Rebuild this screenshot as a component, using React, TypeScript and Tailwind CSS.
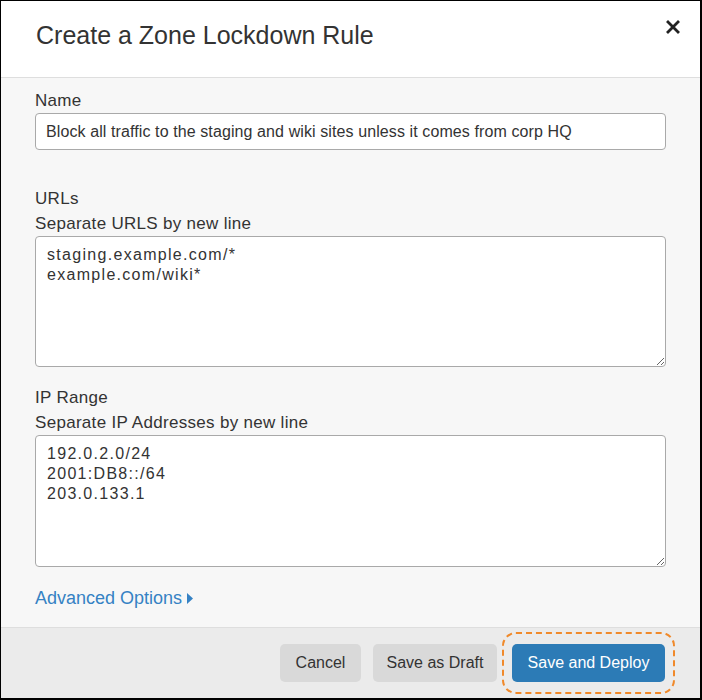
import React from "react";

const font = { fontFamily: '"Liberation Sans", Arial, sans-serif' };

function Field({ label, hint, children }: { label: string; hint?: string; children: React.ReactNode }) {
  return (
    <div className="flex flex-col">
      <div className="text-[17px] leading-[25px] tracking-[0.3px] text-[#333]">{label}</div>
      {hint && <div className="text-[17px] leading-[25px] tracking-[0.3px] text-[#333]">{hint}</div>}
      {children}
    </div>
  );
}

const areaCls =
  "w-full block bg-white border border-[#a9a9a9] rounded-[4px] px-[11px] pt-[8px] text-[16px] leading-[20px] tracking-[1.3px] text-[#333] outline-none";

export default function App() {
  return (
    <div
      className="w-[702px] h-[700px] border border-black border-r-2 border-b-2 flex flex-col bg-white text-[#333]"
      style={font}
    >
      <header className="h-[77px] shrink-0 bg-white border-b border-[#dedede] flex items-center justify-between pl-[35px] pr-[20px]">
        <h1 className="text-[25px] text-[#333] -mt-[7px]">Create a Zone Lockdown Rule</h1>
        <button aria-label="Close" className="-mt-[24px] text-[#222]">
          <svg width="14" height="14" viewBox="0 0 14 14">
            <path d="M2 2 L12 12 M12 2 L2 12" stroke="currentColor" strokeWidth="2.8" strokeLinecap="square" />
          </svg>
        </button>
      </header>

      <main className="flex-1 bg-[#f7f7f7] px-[34px] pt-[10px] flex flex-col">
        <Field label="Name">
          <input
            readOnly
            defaultValue="Block all traffic to the staging and wiki sites unless it comes from corp HQ"
            className="w-full h-[37px] bg-white border border-[#a9a9a9] rounded-[4px] px-[10px] text-[16px] tracking-[0.1px] text-[#333] outline-none"
            style={font}
          />
        </Field>

        <div className="mt-[36px]">
          <Field label="URLs" hint="Separate URLS by new line">
            <textarea
              readOnly
              defaultValue={"staging.example.com/*\nexample.com/wiki*"}
              className={`${areaCls} h-[131px]`}
              style={font}
            />
          </Field>
        </div>

        <div className="mt-[18px]">
          <Field label="IP Range" hint="Separate IP Addresses by new line">
            <textarea
              readOnly
              defaultValue={"192.0.2.0/24\n2001:DB8::/64\n203.0.133.1"}
              className={`${areaCls} h-[132px]`}
              style={font}
            />
          </Field>
        </div>

        <a href="#" className="mt-[20px] flex items-center gap-[5px] text-[18px] leading-[22px] text-[#3582c4]">
          Advanced Options
          <svg width="6" height="11" viewBox="0 0 6 11">
            <path d="M0 0 L6 5.5 L0 11 Z" fill="currentColor" />
          </svg>
        </a>
      </main>

      <footer className="h-[71px] shrink-0 bg-[#ebebeb] border-t border-[#dedede] flex items-center justify-end gap-[12px] pr-[35px]">
        <button className="h-[38px] w-[81px] rounded-[5px] bg-[#d9d9d9] text-[16px] text-[#333]">Cancel</button>
        <button className="h-[38px] w-[124px] rounded-[5px] bg-[#d9d9d9] text-[16px] text-[#333]">Save as Draft</button>
        <div className="relative ml-[3px]">
          <div className="absolute -inset-x-[10px] -inset-y-[12px] border-2 border-dashed border-[#f0892a] rounded-[14px]" />
          <button className="relative h-[38px] w-[153px] rounded-[5px] bg-[#2c7bb6] text-[16px] text-white">
            Save and Deploy
          </button>
        </div>
      </footer>
    </div>
  );
}
